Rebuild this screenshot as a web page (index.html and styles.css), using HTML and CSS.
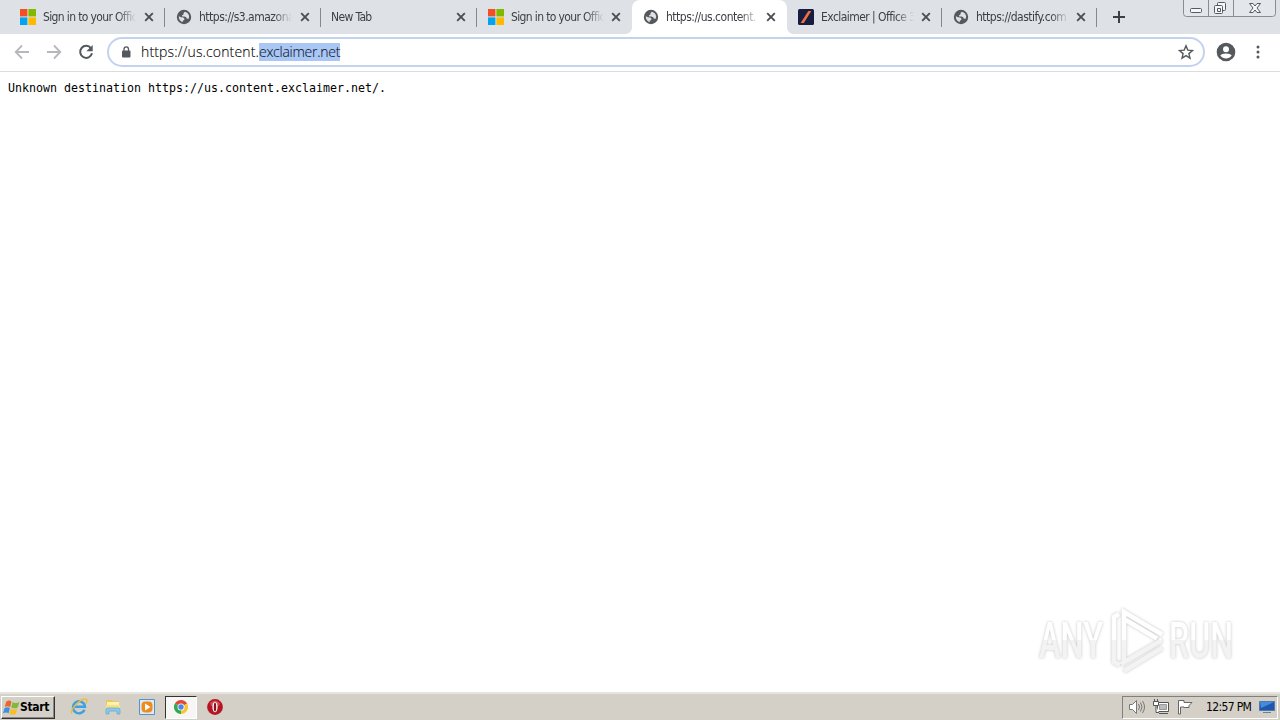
FILE: index.html
```html
<!DOCTYPE html>
<html lang="en">
<head>
<meta charset="utf-8">
<title>us.content.exclaimer.net</title>
<link rel="stylesheet" href="styles.css">
</head>
<body>
<svg class="defs" width="0" height="0">
  <symbol id="ms" viewBox="0 0 16 16"><path fill="#f25022" d="M0 0h7.4v7.4H0z"/><path fill="#7fba00" d="M8.4 0H16v7.4H8.4z"/><path fill="#00a4ef" d="M0 8.4h7.4V16H0z"/><path fill="#ffb900" d="M8.4 8.4H16V16H8.4z"/></symbol>
  <symbol id="globe" viewBox="0 0 16 16"><circle cx="8" cy="8" r="7.200" fill="#55585c"/><path class="land" fill="#dee1e6" d="M2.800 7.300L5 8.200l2.300.2 1.200 1.300-.3 1.200-1.400.8-.2 1.500C4.200 12.500 2.600 10.200 2.800 7.300zM8.800 2.700c2.600.5 4.400 2.700 4.400 5.200l-.8 2-1.700-.3-.5-1.400-1.700-.8-2.300.2-.3-1 1.600-1.200.1-1.400z"/></symbol>
  <symbol id="close" viewBox="0 0 10 10"><path d="M1.200 1.200l7.600 7.600M8.800 1.200L1.200 8.800" stroke="#4b4e54" stroke-width="1.900"/></symbol>
</svg>
<header class="tabstrip">
  <div class="tab"><svg class="fav"><use href="#ms"/></svg><span class="title">Sign in to your Offic</span><svg class="close"><use href="#close"/></svg></div>
  <div class="tab"><svg class="fav"><use href="#globe"/></svg><span class="title t-s3">https://s3.amazona</span><svg class="close"><use href="#close"/></svg></div>
  <div class="tab plain"><span class="title">New Tab</span><svg class="close"><use href="#close"/></svg></div>
  <div class="tab slim nosep"><svg class="fav"><use href="#ms"/></svg><span class="title">Sign in to your Offic</span><svg class="close"><use href="#close"/></svg></div>
  <div class="tab slim active"><svg class="fav"><use href="#globe"/></svg><span class="title t-url">https://us.content.</span><svg class="close"><use href="#close"/></svg></div>
  <div class="tab slim"><svg class="fav" viewBox="0 0 16 16"><rect width="16" height="16" rx="1.500" fill="#161d40"/><path d="M10.300 2h3L5.800 14H2.700z" fill="#f0713c"/></svg><span class="title t-ex">Exclaimer | Office 3</span><svg class="close"><use href="#close"/></svg></div>
  <div class="tab slim"><svg class="fav"><use href="#globe"/></svg><span class="title t-url">https://dastify.com</span><svg class="close"><use href="#close"/></svg></div>
  <svg class="plus" viewBox="0 0 12 12"><path d="M6 0v12M0 6h12" stroke="#3c4043" stroke-width="2"/></svg>
  <svg class="wincontrols" viewBox="0 0 94 18"><path d="M.5-1V13.500q0 3 3 3H89.500q3 0 3-3V-1M25.500 0v16M50.500 0v16" fill="#e3e6ea" stroke="#888c94"/><g fill="#f6f7f9" stroke="#555a64"><rect x="7.500" y="8.500" width="11" height="4" rx="1"/><rect x="34.500" y="2.500" width="8" height="8" rx="1"/><rect x="31.500" y="5.500" width="8" height="8" rx="1"/><path d="M34.500 8.500h3v3h-3z"/><path d="M66.500 3.500h3.500l2 2.500 2-2.500h3.500L74 8l3.500 4.500H74L72 10l-2 2.500h-3.500L70 8z"/></g></svg>
</header>
<nav class="toolbar">
  <svg class="nav" viewBox="0 0 16 16"><path d="M15 8H2M8 1.500L1.700 8 8 14.500" fill="none" stroke="#b6b8bb" stroke-width="1.800"/></svg>
  <svg class="nav" viewBox="0 0 16 16"><path d="M1 8h13M8 1.500L14.300 8 8 14.500" fill="none" stroke="#b6b8bb" stroke-width="1.800"/></svg>
  <svg class="nav" viewBox="0 0 16 16"><path d="M13 4.300A6 6 0 1 0 14 9.300" fill="none" stroke="#55585c" stroke-width="2"/><path d="M14.700 1v6.300H8.400z" fill="#55585c"/></svg>
  <div class="omnibox">
    <svg class="lock" viewBox="0 0 10 12"><rect x="1" y="4.500" width="8.500" height="7" rx="1" fill="#55585c"/><path d="M3 5V3.200a2.200 2.200 0 0 1 4.500 0V5" fill="none" stroke="#55585c" stroke-width="1.300"/></svg>
    <span class="url">https://us.content.<mark>exclaimer.net</mark></span>
    <svg class="star" viewBox="0 0 16 16"><path d="M8 1.800l1.800 4.300 4.700.4-3.600 3.100 1.100 4.600L8 11.700l-4 2.500 1.100-4.600-3.600-3.100 4.700-.4z" fill="none" stroke="#55585c" stroke-width="1.400"/></svg>
  </div>
  <svg class="user" viewBox="0 0 20 20"><circle cx="10" cy="10" r="9.300" fill="#55585c"/><circle cx="10" cy="7.200" r="3" fill="#fff"/><path d="M4.300 13.500c1-2.700 10.400-2.700 11.400 0-2.600 4-8.800 4-11.400 0z" fill="#fff"/></svg>
  <svg class="dots" viewBox="0 0 4 16"><g fill="#55585c"><circle cx="2" cy="3" r="1.500"/><circle cx="2" cy="8" r="1.500"/><circle cx="2" cy="13" r="1.500"/></g></svg>
</nav>
<main class="page">
  <pre>Unknown destination https://us.content.exclaimer.net/.</pre>
  <svg class="watermark" viewBox="0 0 210 76">
    <defs><linearGradient id="fade" x1="0" y1="0" x2="0" y2="76" gradientUnits="userSpaceOnUse"><stop offset=".5" stop-color="#fff"/><stop offset=".5" stop-color="#f3f3f3"/></linearGradient></defs>
    <g fill="url(#fade)"><text x="8" y="56" textLength="64" lengthAdjust="spacingAndGlyphs">ANY</text><text x="138" y="56" textLength="64" lengthAdjust="spacingAndGlyphs">RUN</text></g>
    <g fill="none" stroke="url(#fade)" stroke-width="4.500"><path d="M88 12l-5 3v45l6 3M93 59V10l38 22.500M93 17l33 19.500M90 62l41-24M93 69l38-23"/></g>
  </svg>
</main>
<footer class="taskbar">
  <button class="start"><svg viewBox="0 0 16 16"><path d="M3 2.500q3-2 5 0L6.800 7.500Q4 6 1.700 7.500z" fill="#f06429"/><path d="M9 3q3 1.500 6.500 0L13.800 8q-3 1.600-6 0z" fill="#80b93c"/><path d="M1.500 8.500q3-1.500 5 0L5.300 13.500Q3 12 0 13.500z" fill="#3d8fe0"/><path d="M7.500 9q3 1.600 6 0L12 14q-3 1.500-6 0z" fill="#f9bd25"/></svg><span>Start</span></button>
  <div class="launch">
    <svg viewBox="0 0 18 18"><path d="M14.500 11.800A6 6 0 1 1 15 8.800H4.500" fill="none" stroke="#3fa0e4" stroke-width="2.400"/><path d="M2 15.500C-1 12 12-1 16.500 1.500c1.200 1 .2 2.500-.5 4" fill="none" stroke="#e8bd3a" stroke-width="1.500"/></svg>
    <svg viewBox="0 0 18 18"><path d="M2 2h6l1 1h6v9H2z" fill="#e9c95f"/><path d="M3 4h12v4H3z" fill="#fff3b0"/><path d="M2 7h14v4H2z" fill="#f6df86"/><path d="M2 16v-4q0-2 2-2h10q2 0 2 2v4h-3v-3H5v3z" fill="#8dc9ea" stroke="#5ba7cf" stroke-width=".7"/></svg>
    <svg viewBox="0 0 18 18"><path d="M1.500 1.500h15v15h-15z" fill="#d9ebf8" stroke="#5694c8"/><rect x="3.500" y="3.500" width="11" height="11" rx="4" fill="#f28a1b"/><path d="M7 5.500v7L12.500 9z" fill="#fff"/></svg>
    <span class="running"><svg viewBox="0 0 16 16"><path d="M8 8L1.900 4.500A7 7 0 0 1 14.100 4.500z" fill="#df4937"/><path d="M8 8v7A7 7 0 0 1 1.900 4.500z" fill="#35a853"/><path d="M8 8l6.100-3.500A7 7 0 0 1 8 15z" fill="#f9c633"/><circle cx="8" cy="8" r="3.500" fill="#fff"/><circle cx="8" cy="8" r="2.700" fill="#4a87e8"/></svg></span>
    <svg viewBox="0 0 18 18"><circle cx="9" cy="9" r="7.900" fill="#b51420"/><path d="M4 5q5-5 10 0l-1 3H5z" fill="#cf4d56"/><ellipse cx="9" cy="9" rx="2.600" ry="5.300" fill="#fff"/><ellipse cx="9" cy="9" rx="1.200" ry="4.600" fill="#8d101b"/></svg>
  </div>
  <div class="tray">
    <svg viewBox="0 0 18 16"><g fill="#fff" stroke="#777" stroke-width="1"><path d="M1.500 5.500h3l4-4v13l-4-4h-3z"/><path d="M10.500 5q2 3 0 6M12.500 3.500q3 4.500 0 9M14.500 2q4 6 0 12" fill="none"/></g></svg>
    <svg viewBox="0 0 18 16"><g stroke="#555"><path d="M5.500 3.500h11v9h-11z" fill="#fff"/><path d="M7.500 5.500h7v5h-7z" fill="#bbb" stroke="#999"/><path d="M7 14.500h9M2.500 0v3M5.500 0v3M1.500 2.500h5v4h-5zM4 6.500v7h3" fill="#fff"/></g></svg>
    <svg viewBox="0 0 18 16"><path d="M2.500 15V1.500H8v2h8l-3 3 0 2H8V8H4.500v7z" fill="#fff" stroke="#666"/></svg>
    <time>12:57 PM</time>
    <svg class="desk" viewBox="0 0 16 14"><path d="M.5 1.500h15v9H.5z" fill="#1f57ae" stroke="#5078a8"/><path d="M1 2h14L2 8z" fill="#478cdc"/><path d="M4 12.500h8" stroke="#68809c"/></svg>
  </div>
</footer>
</body>
</html>
```
FILE: styles.css
```css
* { box-sizing: border-box; }
body { margin: 0; width: 1280px; height: 720px; overflow: hidden; display: flex; flex-direction: column; background: #fff; font-family: "DejaVu Sans Condensed", "DejaVu Sans", sans-serif; font-stretch: condensed; }
svg { display: block; flex: none; }
.defs { position: absolute; }
.tabstrip { height: 34px; background: #dee1e6; display: flex; align-items: center; padding-left: 9px; flex: none; }
.tab { width: 156px; height: 34px; display: flex; align-items: center; padding-left: 11px; flex: none; background: linear-gradient(#85888d, #85888d) right 8px / 1px 19px no-repeat; }
.tab.slim { width: 155px; }
.tab.nosep { background: none; }
.tab.plain { padding-left: 10px; }
.tab.plain .title { width: 116px; margin: 0; }
.tab.active { position: relative; background: #fff; border-radius: 8px 8px 0 0; }
.tab.active .land { fill: #fff; }
.tab.active::before, .tab.active::after { content: ""; position: absolute; bottom: 0; width: 6px; height: 6px; }
.tab.active::before { left: -6px; background: radial-gradient(circle at 0 0, transparent 5.5px, #fff 6px); }
.tab.active::after { right: -6px; background: radial-gradient(circle at 100% 0, transparent 5.5px, #fff 6px); }
.fav { width: 16px; height: 16px; }
.title { width: 93px; flex: none; height: 16px; margin-left: 7px; white-space: nowrap; font-size: 12px; line-height: 16px; letter-spacing: -.64px; color: #3c3f44; -webkit-mask-image: linear-gradient(90deg, #000 80%, transparent); mask-image: linear-gradient(90deg, #000 80%, transparent); }
.t-s3 { letter-spacing: -.5px; }
.t-url { letter-spacing: -.5px; }
.t-ex { letter-spacing: -.55px; }
.close { width: 10px; height: 10px; margin-left: 8px; }
.slim .close { margin-left: 7px; }
.plain .close { margin-left: 9px; }
.plus { width: 12px; height: 12px; margin-left: 16px; }
.wincontrols { width: 94px; height: 18px; margin-left: 58px; align-self: flex-start; }
.toolbar { height: 38px; flex: none; border-bottom: 1px solid #dadce0; display: flex; align-items: center; padding: 0 0 2px 14px; }
.nav { width: 16px; height: 16px; margin-right: 16px; }
.omnibox { width: 1098px; height: 30px; margin-left: -3px; border: 2px solid #c1d3ef; border-radius: 15px; display: flex; align-items: center; padding: 0 9px 0 12px; }
.lock { width: 10px; height: 12px; }
.url { flex: 1; margin-left: 10px; font: 300 14px/18px "Open Sans", sans-serif; color: #000; -webkit-text-stroke: .1px #000; letter-spacing: .14px; }
mark { background: #a8c7f4; color: #182238; display: inline-block; height: 18px; letter-spacing: -.25px; }
.star { width: 16px; height: 16px; }
.user { width: 20px; height: 20px; margin-left: 11px; }
.dots { width: 4px; height: 16px; margin-left: 20px; }
.page { flex: 1; display: flex; flex-direction: column; justify-content: space-between; }
pre { margin: 8px; font: 11.630px/16px "DejaVu Sans Mono", monospace; color: #000; }
.watermark { width: 210px; height: 76px; align-self: flex-end; margin: 0 39px 14px 0; filter: drop-shadow(0 0 1.500px #c4c4c4); }
.watermark text { font: 500 50px Roboto, sans-serif; }
.taskbar { height: 28px; flex: none; background: #d4d0c8; border-top: 2px solid #e6e4df; display: flex; align-items: center; padding: 0 2px 0 1px; }
.start { width: 54px; height: 23px; display: flex; align-items: center; gap: 0; padding: 0 1px; border: 1px solid; border-color: #fff #333 #333 #fff; box-shadow: inset -1px -1px #888; background: #d4d0c8; }
.start svg { width: 17px; height: 17px; }
.start span { font: bold 12px "DejaVu Sans Condensed", sans-serif; font-stretch: condensed; letter-spacing: -.3px; color: #000; }
.launch { display: flex; align-items: center; margin-left: 15px; }
.launch > svg { width: 18px; height: 18px; margin-right: 16px; }
.running { width: 32px; height: 23px; display: flex; align-items: center; justify-content: center; margin: 0 10px 0 -7px; background: #f7f6f4; border: 1px solid; border-color: #333 #fff #fff #333; }
.launch .running + svg { margin-left: -1px; }
.running svg { width: 16px; height: 16px; }
.tray { width: 156px; height: 23px; margin-left: auto; display: flex; align-items: center; padding-left: 5px; border: 1px solid; border-color: #808080 #fff #fff #808080; }
.tray svg { width: 18px; height: 16px; margin-right: 6px; }
time { font-size: 12px; letter-spacing: -.65px; color: #000; width: 47px; margin-left: 6px; white-space: nowrap; }
.tray .desk { width: 16px; height: 14px; margin: 0 0 0 6px; }
```
